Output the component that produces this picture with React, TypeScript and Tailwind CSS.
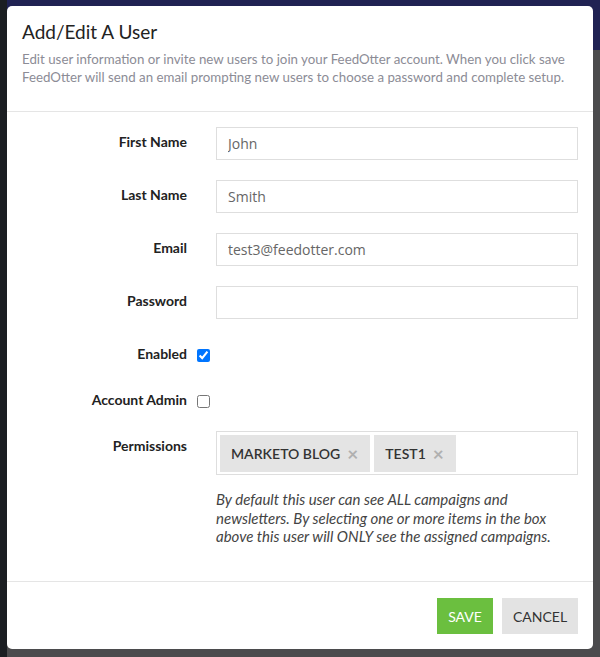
import React from "react";

type FieldProps = {
  label: string;
  value?: string;
  type?: string;
};

const font = { fontFamily: "Lato, 'Open Sans', sans-serif" };

const TextRow = ({ label, value, type = "text" }: FieldProps) => {
  return (
    <div className="flex items-start mb-[20px]">
      <label className="w-[180px] shrink-0 text-right font-bold text-[14px] leading-[20px] pt-[5px] text-[#222]">
        {label}
      </label>
      <input
        type={type}
        defaultValue={value}
        className="ml-[29px] w-[362px] h-[33px] border border-[#dedede] px-[11px] text-[14px] text-[#666] outline-none"
        style={{ fontFamily: "'Open Sans', sans-serif" }}
      />
    </div>
  );
};

const CheckRow = ({ label, checked }: { label: string; checked?: boolean }) => {
  return (
    <div className="flex items-center h-[20px]">
      <label className="w-[180px] shrink-0 text-right font-bold text-[14px] leading-[20px] text-[#222]">
        {label}
      </label>
      <input
        type="checkbox"
        defaultChecked={checked}
        className="ml-[10px] w-[13px] h-[13px] m-0 mt-[2px]"
      />
    </div>
  );
};

const Tag = ({ name }: { name: string }) => (
  <div className="flex items-center h-[37px] bg-[#e4e4e4] pl-[11px] pr-[12px] text-[14px] text-[#333] font-semibold uppercase">
    <span>{name}</span>
    <span className="ml-[7px] text-[#b0b0b0] text-[19px] leading-none font-bold">×</span>
  </div>
);

export default function App() {
  return (
    <div className="relative h-[657px] w-[600px] overflow-hidden bg-[#4b4b4d]" style={font}>
      {/* backdrop behind the modal */}
      <div className="absolute top-0 left-0 w-full h-[50px] bg-[#202253]" />
      <div className="absolute top-0 left-0 w-[7px] h-full bg-[#1b1e22]" />

      <div className="relative ml-[7px] mt-[6px] w-[586px] h-[643px] bg-white rounded-[5px] flex flex-col">
        {/* header */}
        <div className="px-[15px] pt-[14px] h-[106px] border-b border-[#e5e5e5]">
          <h1 className="text-[19px] leading-[24px] text-[#222]">Add/Edit A User</h1>
          <p className="mt-[6px] text-[13.3px] leading-[18px] text-[#8c8c96] whitespace-nowrap">
            Edit user information or invite new users to join your FeedOtter account. When you click save
            <br />
            FeedOtter will send an email prompting new users to choose a password and complete setup.
          </p>
        </div>

        {/* body */}
        <div className="pt-[15px] flex-1 flex flex-col">
          <TextRow label="First Name" value="John" />
          <TextRow label="Last Name" value="Smith" />
          <TextRow label="Email" value="test3@feedotter.com" />
          <TextRow label="Password" type="password" />

          <div className="mt-[5px]">
            <CheckRow label="Enabled" checked />
          </div>
          <div className="mt-[26px]">
            <CheckRow label="Account Admin" />
          </div>

          <div className="flex items-start mt-[21px]">
            <label className="w-[180px] shrink-0 text-right font-bold text-[14px] leading-[20px] pt-[5px] text-[#222]">
              Permissions
            </label>
            <div className="ml-[29px] w-[362px]">
              <div className="h-[44px] border border-[#dedede] p-[3px] flex gap-[4px]">
                <Tag name="Marketo Blog" />
                <Tag name="Test1" />
              </div>
              <p className="mt-[15px] italic text-[15px] leading-[18.5px] text-[#444] whitespace-nowrap">
                By default this user can see ALL campaigns and
                <br />
                newsletters. By selecting one or more items in the box
                <br />
                above this user will ONLY see the assigned campaigns.
              </p>
            </div>
          </div>
        </div>

        {/* footer */}
        <div className="h-[68px] border-t border-[#e5e5e5] flex justify-end items-start pt-[16px] pr-[15px] gap-[9px]">
          <button className="h-[36px] w-[56px] bg-[#6bbf3f] text-white text-[14px] uppercase">Save</button>
          <button className="h-[36px] w-[76px] bg-[#e3e3e3] text-[#333] text-[14px] uppercase">Cancel</button>
        </div>
      </div>
    </div>
  );
}
